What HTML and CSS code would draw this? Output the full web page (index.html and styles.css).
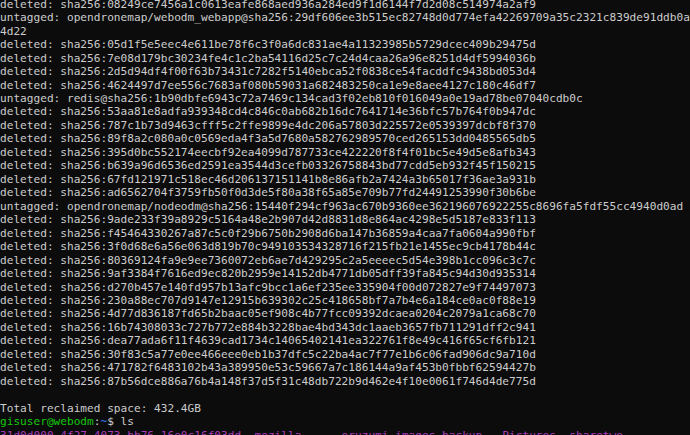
FILE: index.html
```html
<!DOCTYPE html>
<html>
<head>
<meta charset="utf-8">
<link rel="stylesheet" href="styles.css">
</head>
<body>
<pre class="term">deleted: sha256:08249ce7456a1c0613eafe868aed936a284ed9f1d6144f7d2d08c514974a2af9
untagged: opendronemap/webodm_webapp@sha256:29df606ee3b515ec82748d0d774efa42269709a35c2321c839de91ddb0a
4d22
deleted: sha256:05d1f5e5eec4e611be78f6c3f0a6dc831ae4a11323985b5729dcec409b29475d
deleted: sha256:7e08d179bc30234fe4c1c2ba54116d25c7c24d4caa26a96e8251d4df5994036b
deleted: sha256:2d5d94df4f00f63b73431c7282f5140ebca52f0838ce54facddfc9438bd053d4
deleted: sha256:4624497d7ee556c7683af080b59031a682483250ca1e9e8aee4127c180c46df7
untagged: redis@sha256:1b90dbfe6943c72a7469c134cad3f02eb810f016049a0e19ad78be07040cdb0c
deleted: sha256:53aa81e8adfa939348cd4c846c0ab682b16dc7641714e36bfc57b764f0b947dc
deleted: sha256:787c1b73d9463cfff5c2ffe9899e4dc206a57803d225572e0539397dcbf8f370
deleted: sha256:89f8a2c080a0c0569eda4f3a5d7680a582762989570ced265153dd0485565db5
deleted: sha256:395d0bc552174eecbf92ea4099d787733ce422220f8f4f01bc5e49d5e8afb343
deleted: sha256:b639a96d6536ed2591ea3544d3cefb03326758843bd77cdd5eb932f45f150215
deleted: sha256:67fd121971c518ec46d206137151141b8e86afb2a7424a3b65017f36ae3a931b
deleted: sha256:ad6562704f3759fb50f0d3de5f80a38f65a85e709b77fd24491253990f30b6be
untagged: opendronemap/nodeodm@sha256:15440f294cf963ac670b9360ee362196076922255c8696fa5fdf55cc4940d0ad
deleted: sha256:9ade233f39a8929c5164a48e2b907d42d8831d8e864ac4298e5d5187e833f113
deleted: sha256:f45464330267a87c5c0f29b6750b2908d6ba147b36859a4caa7fa0604a990fbf
deleted: sha256:3f0d68e6a56e063d819b70c949103534328716f215fb21e1455ec9cb4178b44c
deleted: sha256:80369124fa9e9ee7360072eb6ae7d429295c2a5eeeec5d54e398b1cc096c3c7c
deleted: sha256:9af3384f7616ed9ec820b2959e14152db4771db05dff39fa845c94d30d935314
deleted: sha256:d270b457e140fd957b13afc9bcc1a6ef235ee335904f00d072827e9f74497073
deleted: sha256:230a88ec707d9147e12915b639302c25c418658bf7a7b4e6a184ce0ac0f88e19
deleted: sha256:4d77d836187fd65b2baac05ef908c4b77fcc09392dcaea0204c2079a1ca68c70
deleted: sha256:16b74308033c727b772e884b3228bae4bd343dc1aaeb3657fb711291dff2c941
deleted: sha256:dea77ada6f11f4639cad1734c14065402141ea322761f8e49c416f65cf6fb121
deleted: sha256:30f83c5a77e0ee466eee0eb1b37dfc5c22ba4ac7f77e1b6c06fad906dc9a710d
deleted: sha256:471782f6483102b43a389950e53c59667a7c186144a9af453b0fbbf62594427b
deleted: sha256:87b56dce886a76b4a148f37d5f31c48db722b9d462e4f10e0061f746d4de775d

Total reclaimed space: 432.4GB
<span class="green">gisuser@webodm</span>:<span class="blue">~</span>$ ls
<span class="purple">31d0d000-4f27-4073-bb76-16e0c16f03dd</span>  <span class="purple">mozilla</span>      <span class="purple">oruzumi-images-backup</span>   <span class="purple">Pictures</span>  <span class="purple">sharetwo</span></pre>
</body>
</html>
```
FILE: styles.css
```css
html, body {
  margin: 0;
  padding: 0;
  background: #0c0c0c;
  width: 690px;
  height: 435px;
  overflow: hidden;
}
.term {
  margin: -2.3px 0 0 0;
  padding: 0;
  font-family: "DejaVu Sans Mono", "Liberation Mono", monospace;
  font-size: 11.13px;
  line-height: 13.47px;
  color: #cccccc;
  white-space: pre;
}
.green { color: #16c60c; }
.blue { color: #3b78ff; }
.purple { color: #a83bb8; }
```
